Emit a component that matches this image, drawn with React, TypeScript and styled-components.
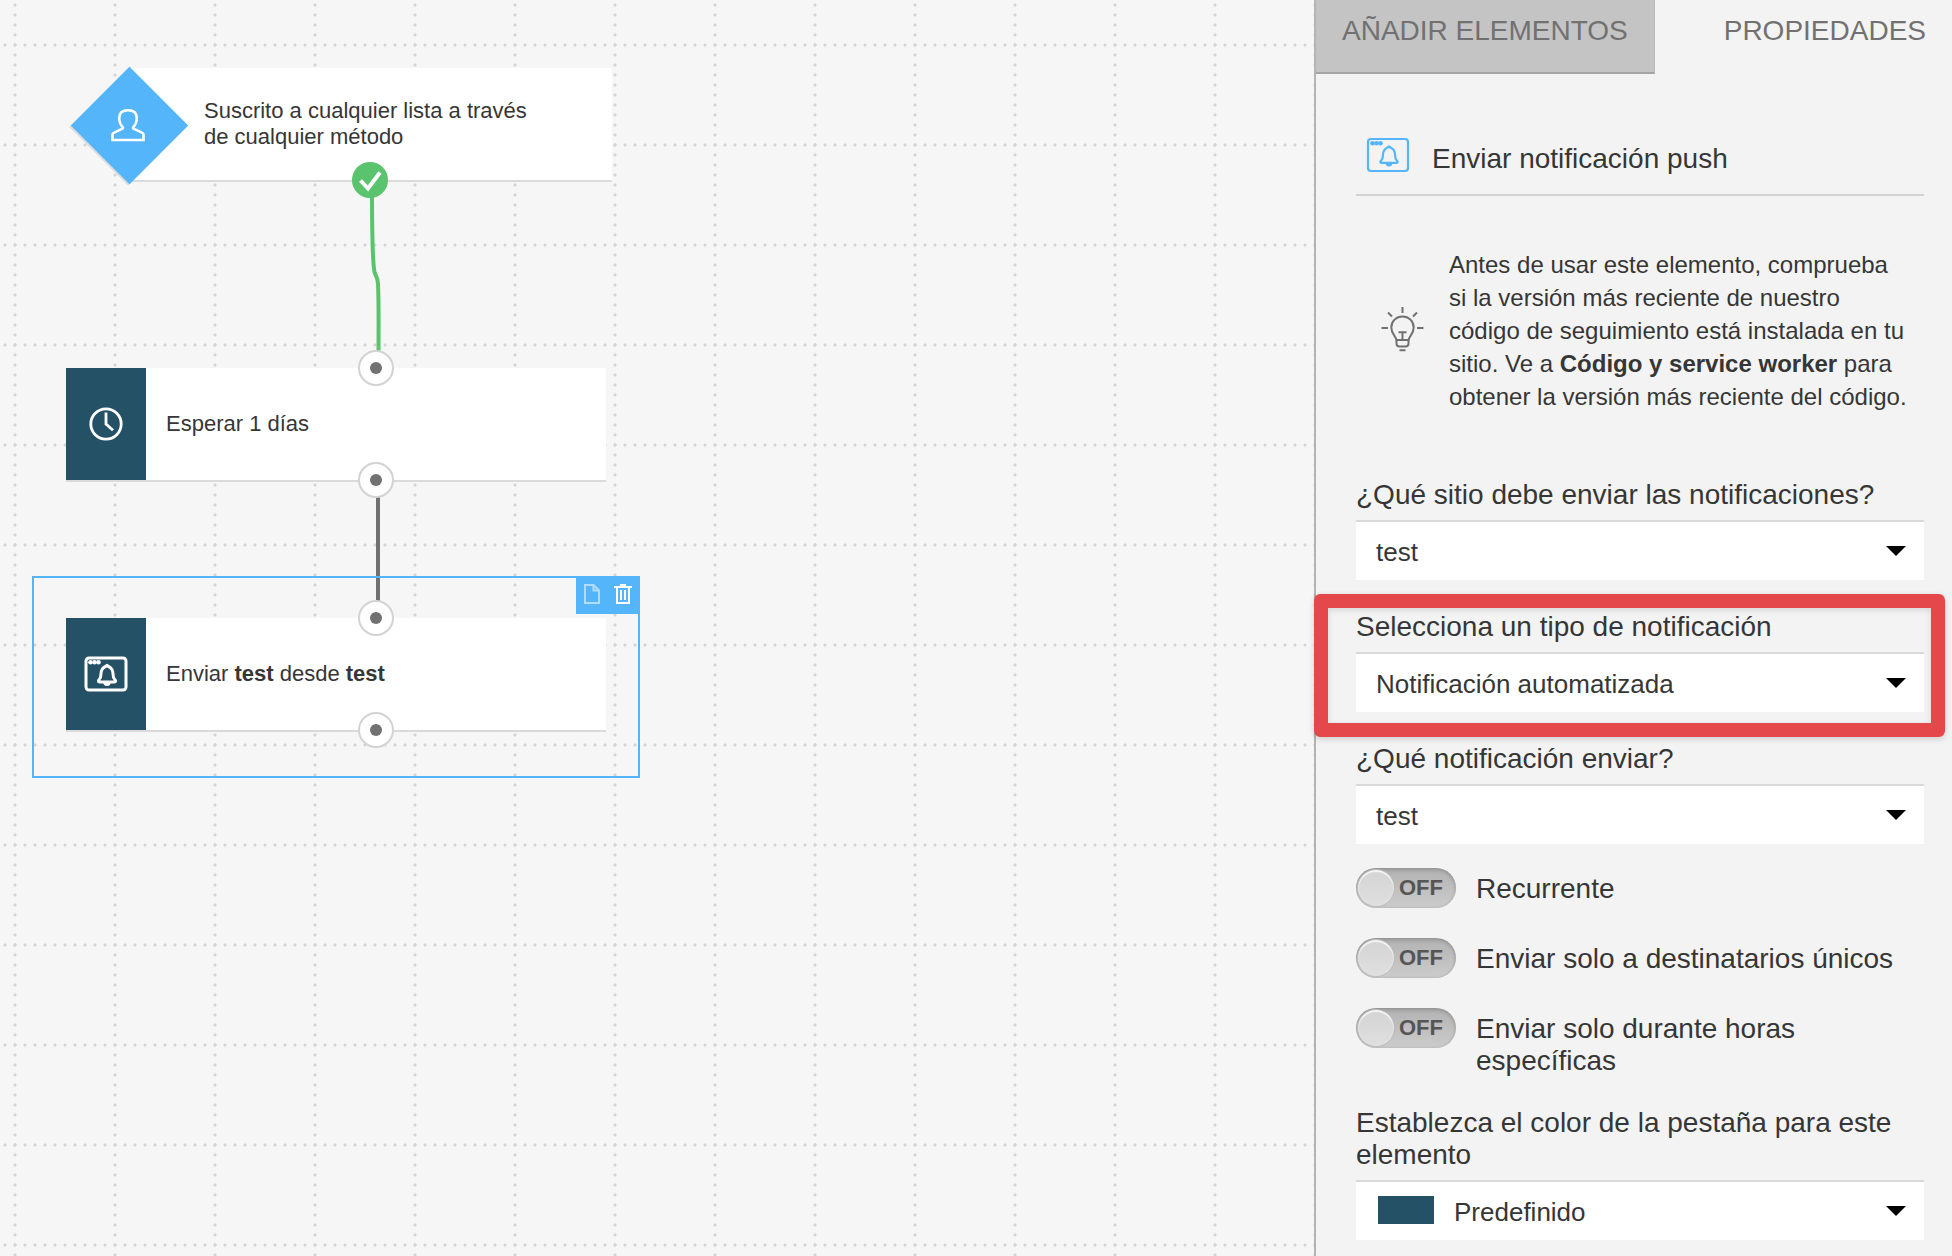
import React, { useState } from 'react';
import styled, { createGlobalStyle } from 'styled-components';

const color = {
  blue: '#54b5fa',
  navy: '#255167',
  green: '#59c36e',
  red: '#e5484b',
  text: '#363636',
  muted: '#717171',
  line: '#d3d3d3',
};

const GlobalStyle = createGlobalStyle`
  *, *::before, *::after { box-sizing: border-box; }
  body {
    margin: 0;
    font-family: "Liberation Sans", Arial, Helvetica, sans-serif;
    color: ${color.text};
  }
  button, select, input { font: inherit; color: inherit; }
`;

const Page = styled.div`
  display: flex;
  min-height: 100vh;
  background: #f6f6f6;
`;

/* ---------- Workflow canvas ---------- */

const Canvas = styled.main`
  position: relative;
  flex: 1;
  min-width: 0;
  background-color: #f6f6f6;
  background-image:
    radial-gradient(circle at 5px 5px, #d3d3d3 1px, transparent 2px),
    radial-gradient(circle at 5px 5px, #d3d3d3 1px, transparent 2px);
  background-size: 10px 100px, 100px 10px;
  background-position: 0 40px, 10px 0;
`;

const Edges = styled.svg`
  position: absolute;
  inset: 0;
  width: 100%;
  height: 100%;
  fill: none;
  stroke-width: 4px;
`;

const Node = styled.article<{ $x: number; $y: number; $width: number }>`
  position: absolute;
  left: ${(p) => p.$x}px;
  top: ${(p) => p.$y}px;
  width: ${(p) => p.$width}px;
  height: 112px;
  display: flex;
  align-items: center;
  background: #fff;
  box-shadow: 0 2px 0 #dadada;
`;

const NodeTab = styled.div`
  display: flex;
  flex: 0 0 80px;
  align-self: stretch;
  align-items: center;
  justify-content: center;
  background: ${color.navy};
  color: #fff;
`;

const NodeText = styled.p<{ $indent: number }>`
  margin: 0;
  padding: 0 60px 0 ${(p) => p.$indent}px;
  font-size: 22px;
  line-height: 26px;
`;

const Diamond = styled.div`
  position: absolute;
  left: -42px;
  top: 16px;
  width: 83px;
  height: 83px;
  display: flex;
  align-items: center;
  justify-content: center;
  color: #fff;

  &::before {
    content: '';
    position: absolute;
    inset: 0;
    background: ${color.blue};
    box-shadow: 0 2px 0 #dadada;
    transform: rotate(45deg);
  }

  svg {
    position: relative;
    margin: 0 4px 2px 0;
  }
`;

const Port = styled.span<{ $x: number; $y: number }>`
  position: absolute;
  left: ${(p) => p.$x - 18}px;
  top: ${(p) => p.$y - 18}px;
  width: 36px;
  height: 36px;
  display: flex;
  align-items: center;
  justify-content: center;
  border: 2px solid ${color.line};
  border-radius: 50%;
  background: #fff;

  &::after {
    content: '';
    width: 12px;
    height: 12px;
    border-radius: 50%;
    background: ${color.muted};
  }
`;

const DonePort = styled.svg`
  position: absolute;
  left: 352px;
  top: 162px;
`;

const Selection = styled.div`
  position: absolute;
  left: 32px;
  top: 576px;
  width: 608px;
  height: 202px;
  border: 2px solid ${color.blue};
`;

const SelectionTools = styled.div`
  position: absolute;
  top: -2px;
  right: -2px;
  display: flex;
  padding-right: 2px;
  background: ${color.blue};
`;

const ToolButton = styled.button<{ $dim?: boolean }>`
  display: flex;
  align-items: center;
  justify-content: center;
  width: 31px;
  height: 38px;
  padding: 0 0 2px;
  border: 0;
  background: none;
  color: ${(p) => (p.$dim ? '#b0dcfc' : '#ffffff')};
`;

/* ---------- Properties panel ---------- */

const Panel = styled.aside`
  flex: 0 0 638px;
  border-left: 2px solid #b4b4b4;
  background: #f3f3f3;
`;

const Tabs = styled.div`
  display: flex;
`;

const Tab = styled.button<{ $active?: boolean }>`
  flex: ${(p) => (p.$active ? '1' : 'none')};
  padding: 15px 26px 25px;
  border: 0 solid ${(p) => (p.$active ? 'transparent' : '#b9b9b9')};
  border-width: 0 ${(p) => (p.$active ? 0 : 1)}px 2px 0;
  border-bottom-color: ${(p) => (p.$active ? 'transparent' : '#a5a5a5')};
  background: ${(p) => (p.$active ? 'transparent' : '#c4c4c4')};
  color: ${color.muted};
  font-size: 28px;
  line-height: 32px;
  text-align: right;
  text-transform: uppercase;
  white-space: nowrap;
`;

const PanelBody = styled.form`
  padding: 63px 28px 16px 40px;
`;

const PanelHeader = styled.header`
  display: flex;
  gap: 22px;
  padding: 0 0 19px 10px;
  border-bottom: 2px solid ${color.line};
  color: ${color.blue};
`;

const PanelTitle = styled.h2`
  margin: 0;
  padding-top: 6px;
  color: ${color.text};
  font-size: 28px;
  font-weight: 400;
  line-height: 32px;
`;

const Hint = styled.section`
  display: flex;
  align-items: center;
  gap: 25px;
  padding: 52px 15px 66px 24px;
  color: ${color.muted};

  svg { flex: none; }
`;

const HintText = styled.p`
  margin: 0;
  color: ${color.text};
  font-size: 24px;
  line-height: 33px;
`;

const Field = styled.div`
  position: relative;
  display: flex;
  flex-direction: column;
  gap: 9px;

  & + & { margin-top: 31px; }
`;

const FieldLabel = styled.label`
  font-size: 28px;
  line-height: 32px;
`;

const SelectBox = styled.div`
  position: relative;

  &::after {
    content: '';
    position: absolute;
    right: 18px;
    top: 26px;
    border: 10px solid transparent;
    border-top-color: #000;
    border-bottom: 0;
    pointer-events: none;
  }
`;

const Select = styled.select<{ $swatch?: boolean }>`
  display: block;
  width: 100%;
  height: 60px;
  padding: 2px 56px 0 ${(p) => (p.$swatch ? 98 : 20)}px;
  border: 0;
  border-top: 2px solid #dadada;
  border-radius: 0;
  background: #fff;
  font-size: 26px;
  appearance: none;
`;

const Swatch = styled.span`
  position: absolute;
  left: 22px;
  top: 16px;
  width: 56px;
  height: 28px;
  background: ${color.navy};
  pointer-events: none;
`;

const Callout = styled.div`
  position: absolute;
  inset: -17px -21px -25px -42px;
  border: 14px solid ${color.red};
  border-radius: 6px;
  box-shadow: 0 2px 6px rgba(0, 0, 0, 0.16), inset 0 2px 6px rgba(0, 0, 0, 0.12);
  pointer-events: none;
`;

const Toggles = styled.div`
  display: flex;
  flex-direction: column;
  gap: 30px;
  margin: 24px 0 30px;
`;

const ToggleRow = styled.label`
  display: flex;
  align-items: flex-start;
  gap: 20px;
`;

const ToggleTrack = styled.span<{ $on: boolean }>`
  position: relative;
  flex: 0 0 100px;
  display: flex;
  flex-direction: ${(p) => (p.$on ? 'row-reverse' : 'row')};
  align-items: center;
  gap: 4px;
  height: 40px;
  padding: 0 1px;
  border-radius: 20px;
  background: linear-gradient(#b2b2b2, #cccccc);
  box-shadow: inset 0 2px 4px rgba(0, 0, 0, 0.16), inset 0 0 3px rgba(0, 0, 0, 0.1);
  color: #555;
  font-size: 22px;
  font-weight: 700;
  line-height: 26px;
`;

const ToggleInput = styled.input`
  position: absolute;
  inset: 0;
  width: 100%;
  height: 100%;
  margin: 0;
  opacity: 0;
`;

const ToggleKnob = styled.span`
  width: 38px;
  height: 38px;
  border: 1px solid #bcbcbc;
  border-radius: 50%;
  background: linear-gradient(#d4d4d4, #dfdfdf);
  box-shadow: inset 0 2px 1px #f6f6f6, inset 0 0 2px #f0f0f0;
`;

const ToggleText = styled.span`
  padding-top: 5px;
  font-size: 28px;
  line-height: 32px;
`;

/* ---------- Icons ---------- */

function PushIcon({ weight }: { weight: number }) {
  return (
    <svg width="44" height="36" viewBox="0 0 44 36" fill="none" stroke="currentColor" strokeWidth={weight} strokeLinejoin="round" aria-hidden="true">
      <rect x="2" y="2" width="40" height="32" rx="3" />
      <g fill="currentColor" stroke="none">
        <circle cx="6.5" cy="6.2" r="2.3" />
        <circle cx="10.5" cy="6.2" r="2.3" />
        <circle cx="14.5" cy="6.2" r="2.3" />
      </g>
      <path d="M23 9.4c-1.200 1.200-3.600 1.800-4.800 3.800-1 1.600-1.300 3.400-1.300 5.200 0 3-.4 4-1.800 5.200-.9.700-1.100 2.300.3 2.300h15.200c1.400 0 1.200-1.600.3-2.300-1.400-1.200-1.800-2.200-1.800-5.200 0-1.800-.3-3.600-1.300-5.200-1.200-2-3.600-2.600-4.800-3.800z" />
      <path d="M20.800 26.500c0 2.600 4.400 2.600 4.400 0z" fill="currentColor" />
    </svg>
  );
}

function ClockIcon() {
  return (
    <svg width="36" height="36" viewBox="0 0 36 36" fill="none" stroke="#fff" strokeWidth="2.800" aria-hidden="true">
      <circle cx="18" cy="18" r="15.200" />
      <path d="M18 6.500V18l7 6.200" />
    </svg>
  );
}

function PersonIcon() {
  return (
    <svg width="36" height="34" viewBox="0 0 36 34" fill="none" stroke="#fff" strokeWidth="2.600" aria-hidden="true">
      <path d="M2.500 32v-5.500c0-.8.500-1.300 1.200-1.600l8.800-4.200c.7-.4.700-1 .2-1.600-2.600-2.600-3.500-5.200-3.500-9 0-5.200 3.500-7.900 8.800-7.900s8.800 2.700 8.800 7.900c0 3.800-.9 6.400-3.500 9-.5.600-.5 1.200.2 1.600l8.800 4.200c.7.300 1.200.8 1.200 1.600V32z" />
    </svg>
  );
}

function FileIcon() {
  return (
    <svg width="16" height="20" viewBox="0 0 16 20" fill="none" stroke="currentColor" strokeWidth="2" aria-hidden="true">
      <path d="M1 1h8.500L15 6.500V19H1z" />
      <path d="M9.500 1v5.500H15" />
    </svg>
  );
}

function TrashIcon() {
  return (
    <svg width="18" height="20" viewBox="0 0 18 20" fill="none" stroke="currentColor" strokeWidth="2" aria-hidden="true">
      <path d="M0 3h18M6 1h6M3 3v16h12V3M7 6v10M11 6v10" />
    </svg>
  );
}

function BulbIcon() {
  return (
    <svg width="44" height="48" viewBox="0 0 44 48" fill="none" stroke="currentColor" strokeWidth="2" aria-hidden="true">
      <path d="M22.500 0v6M1.500 21H8M37 21h6.500M8 5.500l4 4M37 5.500l-4 4" />
      <path d="M16.500 33.500c0-4-5.200-6-5.200-13 0-6.300 4.900-11 11.200-11s11.200 4.700 11.200 11c0 7-5.200 9-5.200 13" />
      <path d="M16.500 33h12v3.500c0 2-1 3-3 3h-6c-2 0-3-1-3-3zM18.500 25.200h8M22.500 25.200V33M19.500 43.200h6" />
    </svg>
  );
}

/* ---------- Composition ---------- */

function SelectField({ id, label, value, swatch, children }: {
  id: string;
  label: string;
  value: string;
  swatch?: boolean;
  children?: React.ReactNode;
}) {
  return (
    <Field>
      <FieldLabel htmlFor={id}>{label}</FieldLabel>
      <SelectBox>
        <Select id={id} $swatch={swatch} defaultValue={value}>
          <option>{value}</option>
        </Select>
        {swatch && <Swatch />}
      </SelectBox>
      {children}
    </Field>
  );
}

function Toggle({ label }: { label: string }) {
  const [on, setOn] = useState(false);
  return (
    <ToggleRow>
      <ToggleTrack $on={on}>
        <ToggleKnob />
        <span aria-hidden="true">{on ? 'ON' : 'OFF'}</span>
        <ToggleInput type="checkbox" checked={on} onChange={(e) => setOn(e.target.checked)} />
      </ToggleTrack>
      <ToggleText>{label}</ToggleText>
    </ToggleRow>
  );
}

export default function App() {
  return (
    <Page>
      <GlobalStyle />
      <Canvas>
        <Edges aria-hidden="true">
          <path d="M372 190C372 225 372.500 262 374.500 272C375.500 276 377.500 276 378 284C379 305 378.500 330 378.500 356" stroke={color.green} />
          <path d="M378 490V610" stroke={color.muted} />
        </Edges>

        <Node $x={130} $y={68} $width={482}>
          <Diamond><PersonIcon /></Diamond>
          <NodeText $indent={74}>Suscrito a cualquier lista a través de cualquier método</NodeText>
        </Node>
        <Node $x={66} $y={368} $width={540}>
          <NodeTab><ClockIcon /></NodeTab>
          <NodeText $indent={20}>Esperar 1 días</NodeText>
        </Node>
        <Node $x={66} $y={618} $width={540}>
          <NodeTab><PushIcon weight={3} /></NodeTab>
          <NodeText $indent={20}>Enviar <b>test</b> desde <b>test</b></NodeText>
        </Node>

        <Selection>
          <SelectionTools>
            <ToolButton type="button" aria-label="Duplicar" $dim><FileIcon /></ToolButton>
            <ToolButton type="button" aria-label="Eliminar"><TrashIcon /></ToolButton>
          </SelectionTools>
        </Selection>

        <DonePort width="36" height="36" viewBox="0 0 36 36" aria-hidden="true">
          <circle cx="18" cy="18" r="18" fill={color.green} />
          <path d="M8.500 18.500l7.500 8L28 10.500" fill="none" stroke="#fff" strokeWidth="4" />
        </DonePort>
        <Port $x={376} $y={368} />
        <Port $x={376} $y={480} />
        <Port $x={376} $y={618} />
        <Port $x={376} $y={730} />
      </Canvas>

      <Panel>
        <Tabs>
          <Tab type="button">Añadir elementos</Tab>
          <Tab type="button" $active>Propiedades</Tab>
        </Tabs>
        <PanelBody>
          <PanelHeader>
            <PushIcon weight={2.2} />
            <PanelTitle>Enviar notificación push</PanelTitle>
          </PanelHeader>
          <Hint>
            <BulbIcon />
            <HintText>
              Antes de usar este elemento, comprueba si la versión más reciente de nuestro código de
              seguimiento está instalada en tu sitio. Ve a <b>Código y service worker</b> para obtener
              la versión más reciente del código.
            </HintText>
          </Hint>
          <SelectField id="site" label="¿Qué sitio debe enviar las notificaciones?" value="test" />
          <SelectField id="type" label="Selecciona un tipo de notificación" value="Notificación automatizada">
            <Callout />
          </SelectField>
          <SelectField id="notification" label="¿Qué notificación enviar?" value="test" />
          <Toggles>
            <Toggle label="Recurrente" />
            <Toggle label="Enviar solo a destinatarios únicos" />
            <Toggle label="Enviar solo durante horas específicas" />
          </Toggles>
          <SelectField id="color" label="Establezca el color de la pestaña para este elemento" value="Predefinido" swatch />
        </PanelBody>
      </Panel>
    </Page>
  );
}
